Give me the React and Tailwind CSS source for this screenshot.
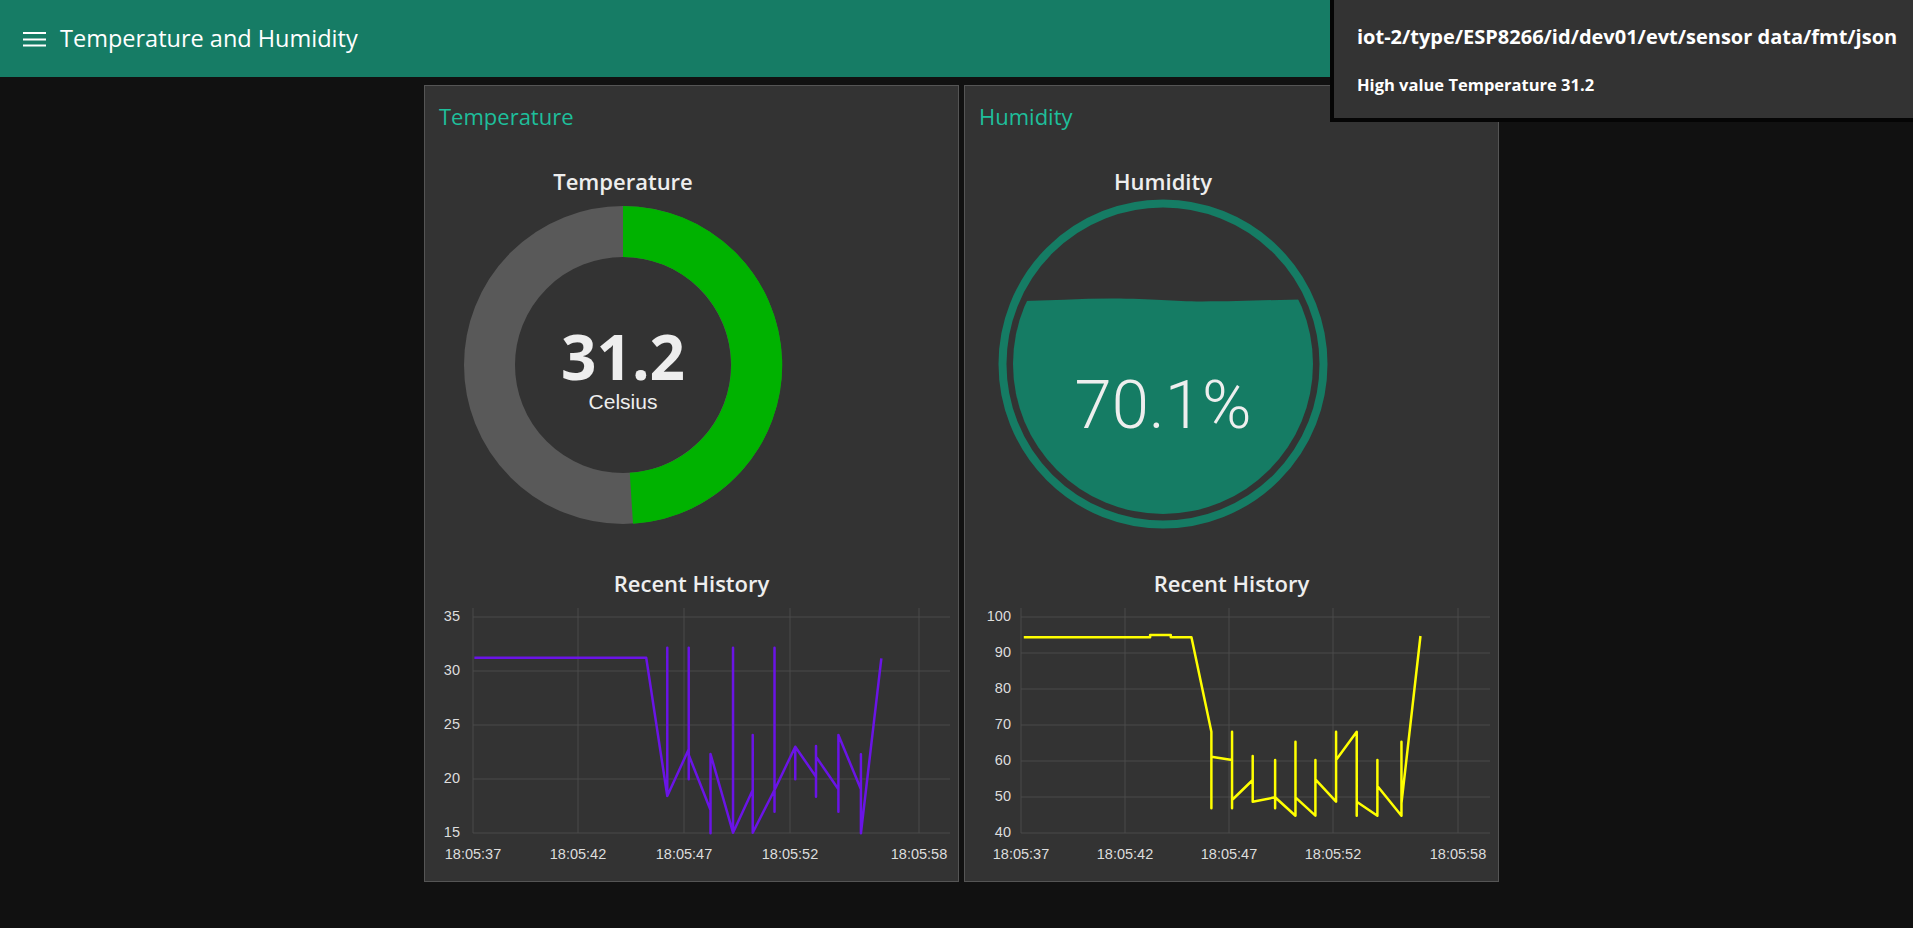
const tempLine = [
  [48.3, 60.7], [214, 60.7], [234.3, 199], [234.3, 50.7], [234.3, 199], [255, 152.3], [255, 50.7], [255, 182.3],
  [255, 158], [276, 213], [276, 236.3], [276, 157], [297.7, 235.7], [297.7, 50.7], [297.7, 235.7], [316.7, 193],
  [316.7, 138], [316.7, 235.7], [337.7, 193], [337.7, 50.7], [337.7, 214.7], [337.7, 193], [357.7, 149.7],
  [357.7, 182.3], [357.7, 149.7], [377.7, 179.7], [377.7, 149], [377.7, 199.7], [377.7, 159.7], [399.3, 192.3],
  [399.3, 138], [399.3, 214.7], [399.3, 138], [421, 192.3], [421, 157.3], [421, 236.3], [440.7, 61.3],
];

const humLine = [
  [57.7, 40.3], [180, 40.3], [180, 38], [200, 38], [200, 40.3], [220, 40.3], [239.3, 134.7], [239.3, 211.3],
  [239.3, 159.7], [259.3, 163], [259.3, 134.7], [259.3, 211.3], [259.3, 203], [279.3, 183], [279.3, 159],
  [279.3, 204.7], [301, 200.3], [301, 163], [301, 211.3], [301, 200.3], [320.7, 218.7], [320.7, 144.7],
  [320.7, 200.3], [340, 218.7], [340, 163], [340, 182.3], [360, 204.7], [360, 134.7], [360, 163], [380, 134.7],
  [380, 218.7], [380, 204.7], [400, 218.7], [400, 163], [400, 189], [423.3, 218.7], [423.3, 144.7],
  [423.3, 206.3], [441.7, 39],
];

// line data was traced on a slightly narrower grid, so stretch it onto the tick positions
const tempChart = {
  left: 48,
  labelX: 35,
  yTicks: [[35, 20], [30, 74], [25, 128], [20, 182], [15, 236]],
  xTicks: [["18:05:37", 48], ["18:05:42", 153], ["18:05:47", 259], ["18:05:52", 365], ["18:05:58", 494]],
  line: tempLine.map(([x, y]) => [48 + (x - 47) * 1.0372, y]),
  color: "#6a14e6",
};

const humChart = {
  left: 56,
  labelX: 46,
  yTicks: [[100, 20], [90, 56], [80, 92], [70, 128], [60, 164], [50, 200], [40, 236]],
  xTicks: [["18:05:37", 56], ["18:05:42", 160], ["18:05:47", 264], ["18:05:52", 368], ["18:05:58", 493]],
  line: humLine.map(([x, y]) => [56 + (x - 55) * 1.033, y]),
  color: "#ffff00",
};

function Card({ title, children }) {
  return (
    <div className="w-[535px] h-[797px] border border-[#555] bg-[#333] flex flex-col">
      <div className="h-[60px] flex items-center pl-[14px] text-[22px] text-[#1ebf9b]">{title}</div>
      {children}
    </div>
  );
}

function Donut() {
  return (
    <div className="relative w-[330px] h-[330px] mt-[6px]">
      <svg width="330" height="330" viewBox="0 0 330 330">
        <circle cx="165" cy="165" r="133.5" fill="none" stroke="#595959" strokeWidth="51" />
        <path d="M165 6 A159 159 0 0 1 175 323.7 L171.8 272.8 A108 108 0 0 0 165 57 Z" fill="#00b200" />
      </svg>
      <div className="absolute left-0 right-0 top-[125px] h-[62px] leading-[62px] text-center text-[62px] font-bold text-[#eee]">
        31.2
      </div>
      <div className="absolute left-0 right-0 top-[190px] h-[24px] leading-[24px] text-center text-[21px] text-[#eee] font-['Liberation_Sans',Arial,sans-serif]">
        Celsius
      </div>
    </div>
  );
}

function Liquid() {
  return (
    <div className="relative w-[340px] h-[340px]">
      <svg width="340" height="340" viewBox="0 0 340 340">
        <defs>
          <clipPath id="liquidClip">
            <circle cx="170" cy="170" r="150" />
          </clipPath>
        </defs>
        <circle cx="170" cy="170" r="160.5" fill="none" stroke="#157c64" strokeWidth="8" />
        <path
          d="M0 107 C40 108 80 104.5 119 104.5 C160 104.5 180 107.5 209 107.5 C250 107.5 280 105.5 340 105 L340 340 L0 340 Z"
          fill="#157c64"
          clipPath="url(#liquidClip)"
        />
      </svg>
      <div className="absolute left-0 right-0 top-[178px] h-[66px] leading-[66px] text-center text-[67px] font-light text-[#eee] font-['Roboto',sans-serif]">
        70.1%
      </div>
    </div>
  );
}

function Gauge({ label, children }) {
  return (
    <div className="w-[396px] h-[423px] flex flex-col items-center">
      <div className="mt-[22px] h-[26px] leading-[26px] text-[22px] font-semibold text-[#eee]">{label}</div>
      {children}
    </div>
  );
}

function History({ chart }) {
  const pts = chart.line.map(([x, y]) => `${x},${y}`).join(" ");
  return (
    <div className="flex flex-col">
      <div className="h-[28px] leading-[28px] text-center text-[22px] font-semibold text-[#eee]">Recent History</div>
      <svg width="533" height="278" viewBox="0 0 533 278" className="font-['Liberation_Sans',Arial,sans-serif]">
        {chart.yTicks.map(([v, y]) => (
          <g key={v}>
            <line x1={chart.left} x2="525" y1={y} y2={y} stroke="#4a4a4a" strokeWidth="1" />
            <text x={chart.labelX} y={y} textAnchor="end" dominantBaseline="middle" fontSize="14.5" fill="#ddd">
              {v}
            </text>
          </g>
        ))}
        {chart.xTicks.map(([t, x]) => (
          <g key={t}>
            <line x1={x} x2={x} y1="11" y2="236" stroke="#4a4a4a" strokeWidth="1" />
            <text x={x} y="258" textAnchor="middle" dominantBaseline="middle" fontSize="14.5" fill="#ddd">
              {t}
            </text>
          </g>
        ))}
        <polyline points={pts} fill="none" stroke={chart.color} strokeWidth="2.5" strokeLinejoin="round" />
      </svg>
    </div>
  );
}

export default function App() {
  return (
    <div className="relative min-h-screen bg-[#111] font-['Open_Sans',sans-serif] overflow-hidden">
      <header className="h-[77px] bg-[#167c65] flex items-center text-white">
        <svg width="23" height="24" viewBox="0 0 23 24" className="ml-[23px]">
          <path d="M0 6h23M0 12.5h23M0 18.5h23" stroke="currentColor" strokeWidth="2" />
        </svg>
        <span className="ml-[14px] text-[23.5px]">Temperature and Humidity</span>
      </header>

      <main className="flex gap-[5px] ml-[424px] pt-[8px]">
        <Card title="Temperature">
          <Gauge label="Temperature">
            <Donut />
          </Gauge>
          <History chart={tempChart} />
        </Card>
        <Card title="Humidity">
          <Gauge label="Humidity">
            <Liquid />
          </Gauge>
          <History chart={humChart} />
        </Card>
      </main>

      {/* notification toast */}
      <div className="absolute top-0 right-0 w-[583px] h-[122px] bg-[#333] border-l-[4px] border-b-[4px] border-black/90 pl-[23px] text-white font-bold">
        <div className="mt-[24px] h-[26px] leading-[26px] text-[20px]">iot-2/type/ESP8266/id/dev01/evt/sensor data/fmt/json</div>
        <div className="mt-[24px] h-[22px] leading-[22px] text-[16.5px]">High value Temperature 31.2</div>
      </div>
    </div>
  );
}
